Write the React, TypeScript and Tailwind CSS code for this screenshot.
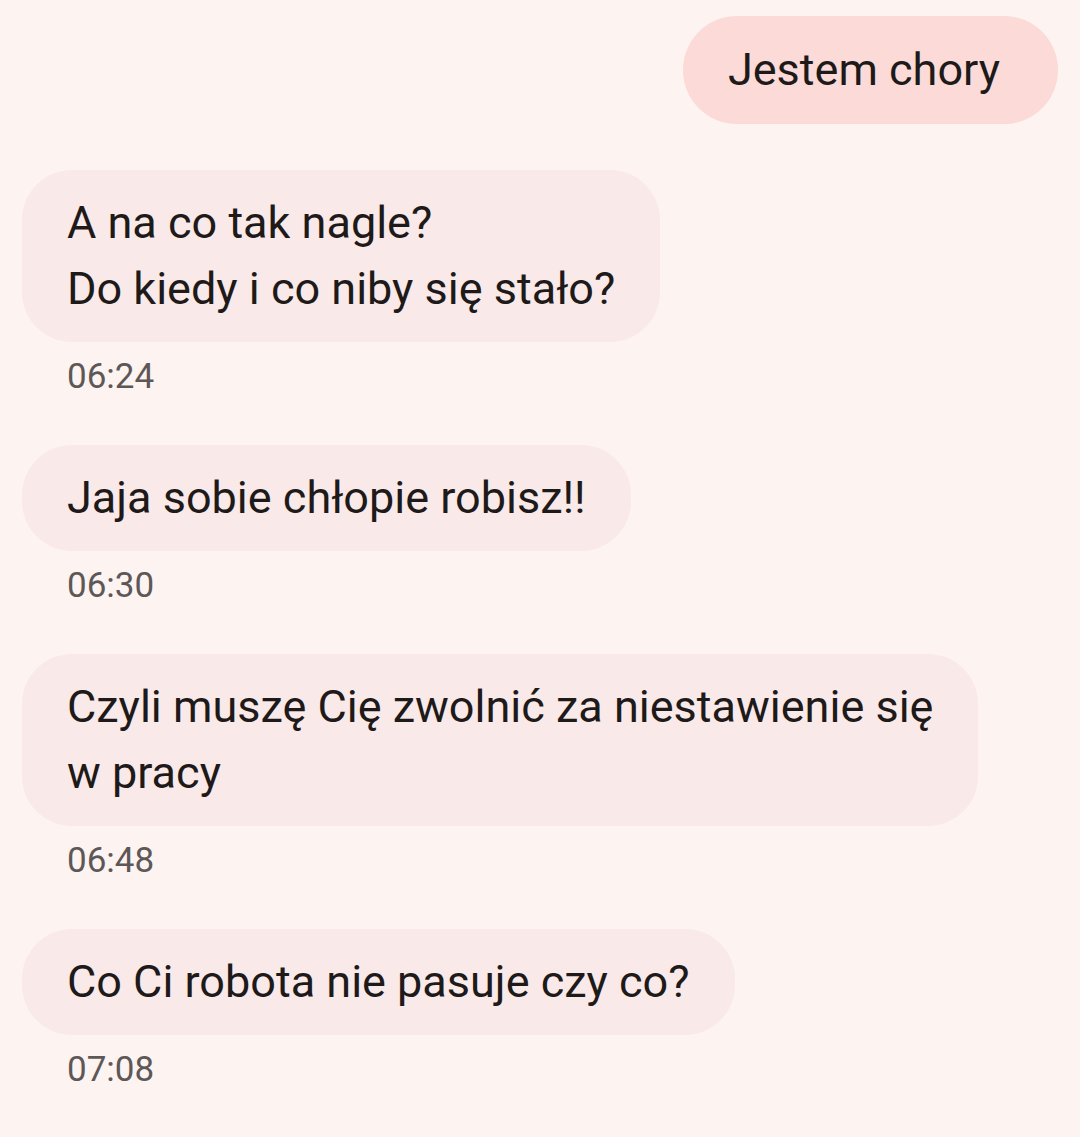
import React from "react";

const font = { fontFamily: "Roboto, 'Noto Sans', sans-serif" };

function Incoming({ text, time }: { text: React.ReactNode; time: string }) {
  return (
    <div className="flex flex-col items-start">
      <div className="max-w-[990px] rounded-[50px] bg-[#f9e9e8] px-[45px] py-[20px] text-[45px] leading-[66px] text-[#1e1a1a]">
        {text}
      </div>
      <div className="mt-[15px] mb-[48px] pl-[45px] text-[35px] leading-[40px] text-[#5d5857]">{time}</div>
    </div>
  );
}

export default function App() {
  return (
    <div className="min-h-[1137px] w-[1080px] overflow-hidden bg-[#fdf3f1] px-[22px] pt-[16px]" style={font}>
      <div className="flex justify-end">
        <div className="rounded-full bg-[#fbdad8] py-[21px] pl-[45px] pr-[58px] text-[45px] leading-[66px] text-[#1e1a1a]">
          Jestem chory
        </div>
      </div>
      <div className="mt-[46px] flex flex-col">
        <Incoming
          text={
            <>
              A na co tak nagle?
              <br />
              Do kiedy i co niby się stało?
            </>
          }
          time="06:24"
        />
        <Incoming text="Jaja sobie chłopie robisz!!" time="06:30" />
        <Incoming
          text={
            <>
              Czyli muszę Cię zwolnić za niestawienie się
              <br />
              w pracy
            </>
          }
          time="06:48"
        />
        <Incoming text="Co Ci robota nie pasuje czy co?" time="07:08" />
      </div>
    </div>
  );
}
